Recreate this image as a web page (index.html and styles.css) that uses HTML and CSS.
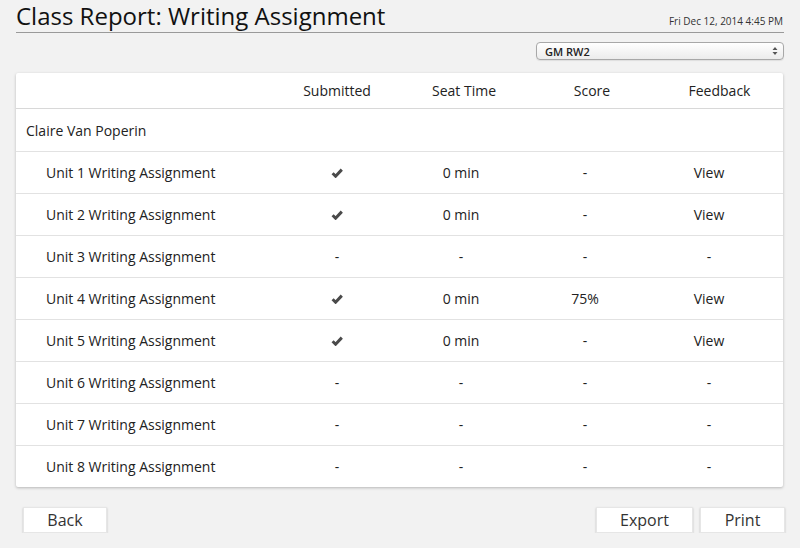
FILE: index.html
```html
<!DOCTYPE html>
<html>
<head>
<meta charset="utf-8">
<title>Class Report: Writing Assignment</title>
<link rel="stylesheet" href="styles.css">
</head>
<body>
<div class="page">
  <header class="header">
    <h1 class="title">Class Report: Writing Assignment</h1>
    <div class="date">Fri Dec 12, 2014 4:45 PM</div>
  </header>
  <div class="toolbar">
    <div class="select"><span>GM RW2</span><svg class="arrows" viewBox="0 0 6 10" width="6" height="10"><path d="M0.5 4 L3 1 L5.5 4 Z M0.5 6 L3 9 L5.5 6 Z"/></svg></div>
  </div>
  <div class="card">
    <div class="row head">
      <div class="cell name"></div>
      <div class="cell">Submitted</div>
      <div class="cell">Seat Time</div>
      <div class="cell">Score</div>
      <div class="cell">Feedback</div>
    </div>
    <div class="row body">
      <div class="cell name student">Claire Van Poperin</div>
    </div>
    <div class="row body">
      <div class="cell name unit">Unit 1 Writing Assignment</div>
      <div class="cell"><svg class="check" viewBox="0 0 12 10" width="12" height="10"><polyline points="1.6,5.2 4.6,8.2 10.8,1.6"/></svg></div>
      <div class="cell">0 min</div>
      <div class="cell">-</div>
      <div class="cell">View</div>
    </div>
    <div class="row body">
      <div class="cell name unit">Unit 2 Writing Assignment</div>
      <div class="cell"><svg class="check" viewBox="0 0 12 10" width="12" height="10"><polyline points="1.6,5.2 4.6,8.2 10.8,1.6"/></svg></div>
      <div class="cell">0 min</div>
      <div class="cell">-</div>
      <div class="cell">View</div>
    </div>
    <div class="row body">
      <div class="cell name unit">Unit 3 Writing Assignment</div>
      <div class="cell">-</div>
      <div class="cell">-</div>
      <div class="cell">-</div>
      <div class="cell">-</div>
    </div>
    <div class="row body">
      <div class="cell name unit">Unit 4 Writing Assignment</div>
      <div class="cell"><svg class="check" viewBox="0 0 12 10" width="12" height="10"><polyline points="1.6,5.2 4.6,8.2 10.8,1.6"/></svg></div>
      <div class="cell">0 min</div>
      <div class="cell">75%</div>
      <div class="cell">View</div>
    </div>
    <div class="row body">
      <div class="cell name unit">Unit 5 Writing Assignment</div>
      <div class="cell"><svg class="check" viewBox="0 0 12 10" width="12" height="10"><polyline points="1.6,5.2 4.6,8.2 10.8,1.6"/></svg></div>
      <div class="cell">0 min</div>
      <div class="cell">-</div>
      <div class="cell">View</div>
    </div>
    <div class="row body">
      <div class="cell name unit">Unit 6 Writing Assignment</div>
      <div class="cell">-</div>
      <div class="cell">-</div>
      <div class="cell">-</div>
      <div class="cell">-</div>
    </div>
    <div class="row body">
      <div class="cell name unit">Unit 7 Writing Assignment</div>
      <div class="cell">-</div>
      <div class="cell">-</div>
      <div class="cell">-</div>
      <div class="cell">-</div>
    </div>
    <div class="row body">
      <div class="cell name unit">Unit 8 Writing Assignment</div>
      <div class="cell">-</div>
      <div class="cell">-</div>
      <div class="cell">-</div>
      <div class="cell">-</div>
    </div>
  </div>
  <div class="footer">
    <button class="btn back">Back</button>
    <div class="spacer"></div>
    <button class="btn export">Export</button>
    <button class="btn print">Print</button>
  </div>
</div>
</body>
</html>
```
FILE: styles.css
```css
html, body {
  margin: 0;
  padding: 0;
  background: #f2f2f2;
  font-family: "Open Sans", "Noto Sans", sans-serif;
  color: #222;
}

.page {
  padding: 0 16px 0 16px;
  width: 768px;
}

.header {
  display: flex;
  align-items: baseline;
  justify-content: space-between;
  border-bottom: 1px solid #9a9a9a;
  height: 32px;
}

.title {
  margin: 0;
  font-size: 24px;
  font-weight: 400;
  line-height: 32px;
  color: #111;
}

.date {
  font-size: 10px;
  color: #333;
  padding-right: 1px;
}

.toolbar {
  display: flex;
  justify-content: flex-end;
  margin-top: 9px;
}

.select {
  width: 238px;
  height: 16px;
  border: 1px solid #a8a8a8;
  border-radius: 4px;
  background: linear-gradient(#ffffff, #ececec);
  display: flex;
  align-items: center;
  justify-content: space-between;
  padding: 0 0 0 8px;
  box-sizing: content-box;
  font-size: 11px;
  font-weight: 600;
  color: #222;
  box-shadow: 0 1px 1px rgba(0,0,0,0.08);
}

.arrows {
  display: block;
  margin-right: 5px;
  fill: #555;
}

.card {
  margin-top: 13px;
  background: #fff;
  width: 767px;
  box-shadow: 0 1px 3px rgba(0,0,0,0.25);
  border-radius: 2px;
}

.row {
  display: grid;
  height: 42px;
  border-top: 1px solid #e2e2e2;
  box-sizing: border-box;
  font-size: 14px;
}

.row.head {
  grid-template-columns: 258px 126px 128px 128px 127px;
  height: 36px;
  border-top: none;
  border-bottom: 1px solid #d8d8d8;
}

.row.body {
  grid-template-columns: 259px 124px 124px 124px 124px;
}

.row.head + .row {
  border-top: none;
}

.cell {
  display: flex;
  align-items: center;
  justify-content: center;
  color: #222;
}

.cell.name {
  justify-content: flex-start;
}

.student {
  padding-left: 10px;
}

.unit {
  padding-left: 30px;
}

.check {
  display: block;
}

.check polyline {
  fill: none;
  stroke: #4a4a4a;
  stroke-width: 3;
  stroke-linecap: butt;
  stroke-linejoin: miter;
}

.footer {
  display: flex;
  margin-top: 20px;
  gap: 7px;
  padding-left: 7px;
}

.spacer {
  flex: 1;
}

.btn {
  font-family: "Open Sans", "Noto Sans", sans-serif;
  font-size: 16px;
  color: #333;
  background: #fff;
  border: 1px solid #e6e6e6;
  box-shadow: 0 1px 2px rgba(0,0,0,0.2);
  height: 26px;
  padding: 0;
  line-height: 24px;
  cursor: pointer;
}

.back { width: 84px; }
.export { width: 97px; }
.print { width: 85px; margin-right: -1px; }
```
